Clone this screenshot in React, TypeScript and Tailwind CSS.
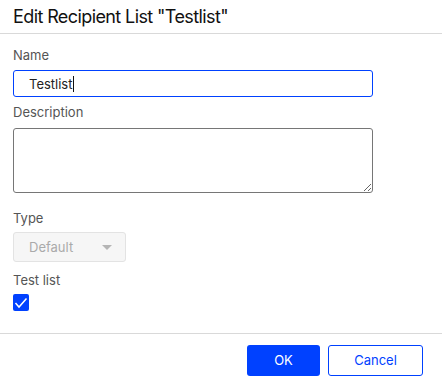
export default function App() {
  return (
    <div className="w-[442px] h-[385px] bg-white flex flex-col font-['Inter','Liberation_Sans',sans-serif] overflow-hidden">
      {/* header */}
      <div className="h-[34px] shrink-0 border-b border-[#d9d9d9] px-[13px] flex items-center">
        <h1 className="text-[18px] leading-none tracking-[-0.6px] text-[#111] pt-[1px]">
          Edit Recipient List "Testlist"
        </h1>
      </div>

      {/* body */}
      <div className="flex-1 px-[13px] pt-[13px] text-[13px] leading-[16px]">
        <label className="block text-[#555]">Name</label>
        <div className="mt-[7px] w-[360px] h-[27px] border border-[#0041ff] rounded-[3px] pl-[15px] flex items-center text-[#222]">
          <span>Testlist</span>
          <span className="w-px h-[16px] bg-[#111] ml-[1px]"></span>
        </div>

        <label className="block mt-[7px] text-[#555]">Description</label>
        <textarea className="block mt-[8px] w-[360px] h-[65px] border border-[#767676] rounded-[3px] resize-y outline-none" />

        <label className="block mt-[17px] text-[#555]">Type</label>
        <div className="mt-[6px] w-[113px] h-[30px] border border-[#e3e3e3] bg-[#f6f6f6] rounded-[3px] flex items-center justify-between pl-[15px] pr-[13px] text-[#aaa]">
          <span>Default</span>
          <svg width="10" height="5" viewBox="0 0 10 5">
            <path d="M0 0 L10 0 L5 5 Z" fill="#b5b5b5" />
          </svg>
        </div>

        <label className="block mt-[10px] text-[#555]">Test list</label>
        <div className="mt-[6px] w-[16px] h-[17px] rounded-[2px] bg-[#0041ff] flex items-center justify-center">
          <svg width="14" height="12" viewBox="0 0 14 12">
            <path d="M1.5 6 L5 10 L12.5 1.5" fill="none" stroke="#fff" strokeWidth="1.5" />
          </svg>
        </div>
      </div>

      {/* footer */}
      <div className="h-[52px] shrink-0 border-t border-[#d9d9d9] flex items-start justify-end gap-2 pt-[11px] pr-[19px] text-[13px]">
        <button className="w-[73px] h-[31px] rounded-[3px] bg-[#0041ff] text-white">OK</button>
        <button className="w-[95px] h-[31px] rounded-[3px] border border-[#0041ff] bg-white text-[#0041ff]">Cancel</button>
      </div>
    </div>
  );
}
